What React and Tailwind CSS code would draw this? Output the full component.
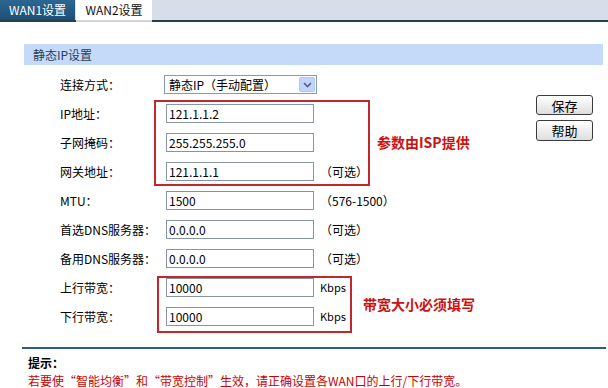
import React from "react";

const Input = ({ v }) => (
  <div className="w-[148px] h-[19px] border border-[#8595a6] bg-white flex items-center pl-[2px] text-[12px] leading-none text-black">
    {v}
  </div>
);

const Row = ({ label, children }) => (
  <div className="h-[29px] flex items-center">
    <div className="w-[142px] pl-[36px] shrink-0 whitespace-nowrap">{label}</div>
    {children}
  </div>
);

export default function App() {
  return (
    <div className="w-[608px] h-[388px] bg-white overflow-hidden font-['Noto_Sans_CJK_SC',sans-serif] text-[12px] text-black">
      {/* tab bar */}
      <div className="h-[22px] bg-[#d7deea] border-b-2 border-[#26404e] flex items-stretch">
        <div className="w-[75px] h-[20px] bg-linear-to-b from-[#2d6690] to-[#1b4f78] text-white flex items-center justify-center leading-none">
          WAN1设置
        </div>
        <div className="ml-[1px] w-[76px] h-[22px] -mb-[2px] bg-white border-b-2 border-[#d4d4d4] flex items-center justify-center leading-none text-[#111]">
          WAN2设置
        </div>
      </div>

      <div className="pl-[24px] pr-[5px] pt-[22px]">
        {/* section header */}
        <div className="h-[21px] bg-[#c5d9f8] flex items-center pl-[9px] text-[#27405a] leading-none">
          静态IP设置
        </div>

        {/* form */}
        <div className="relative mt-[5px] flex">
          <div className="flex flex-col">
            <Row label="连接方式：">
              <div className="-ml-[2px] w-[153px] h-[19px] border border-[#7f9db9] bg-white flex items-center justify-between leading-none">
                <span className="pl-[4px]">静态IP（手动配置）</span>
                <span className="w-[16px] h-[15px] mr-[1px] bg-[#c3d4fb] border border-[#b1c6ef] rounded-[2px] flex items-center justify-center">
                  <svg width="9" height="6" viewBox="0 0 9 6">
                    <path d="M1 1 L4.5 4.5 L8 1" fill="none" stroke="#4d6185" strokeWidth="1.6" />
                  </svg>
                </span>
              </div>
            </Row>
            <Row label="IP地址：">
              <Input v="121.1.1.2" />
            </Row>
            <Row label="子网掩码：">
              <Input v="255.255.255.0" />
            </Row>
            <Row label="网关地址：">
              <Input v="121.1.1.1" />
              <span className="ml-[6px]">（可选）</span>
            </Row>
            <Row label="MTU：">
              <Input v="1500" />
              <span className="ml-[6px]">（576-1500）</span>
            </Row>
            <Row label="首选DNS服务器：">
              <Input v="0.0.0.0" />
              <span className="ml-[6px]">（可选）</span>
            </Row>
            <Row label="备用DNS服务器：">
              <Input v="0.0.0.0" />
              <span className="ml-[6px]">（可选）</span>
            </Row>
            <Row label="上行带宽：">
              <Input v="10000" />
              <span className="ml-[6px] text-[11px]">Kbps</span>
            </Row>
            <Row label="下行带宽：">
              <Input v="10000" />
              <span className="ml-[6px] text-[11px]">Kbps</span>
            </Row>
          </div>

          <div className="flex-1" />

          <div className="flex flex-col gap-[5px] pt-[25px] mr-[10px]">
            <button className="w-[57px] h-[20px] rounded-[3px] border border-[#3c3c3c] bg-linear-to-b from-white to-[#dedede] text-[13px] leading-none flex items-center justify-center">
              保存
            </button>
            <button className="w-[57px] h-[21px] rounded-[3px] border border-[#3c3c3c] bg-linear-to-b from-white to-[#dedede] text-[13px] leading-none flex items-center justify-center">
              帮助
            </button>
          </div>

          {/* annotations */}
          <div className="absolute left-[130px] top-[30px] w-[216px] h-[86px] border-2 border-[#c1272d]" />
          <div className="absolute left-[353px] top-[65px] text-[14px] font-bold text-[#cc1111] leading-none whitespace-nowrap">
            参数由ISP提供
          </div>
          <div className="absolute left-[133px] top-[206px] w-[195px] h-[57px] border-2 border-[#c1272d]" />
          <div className="absolute left-[339px] top-[227px] text-[14px] font-bold text-[#cc1111] leading-none whitespace-nowrap">
            带宽大小必须填写
          </div>
        </div>

        {/* bottom */}
        <div className="mt-[16px] -ml-[2px] mr-[-3px] h-[2px] bg-[#2b5d80]" />
        <div className="pl-[4px] pt-[6px] leading-[16px]">
          <div className="font-bold">提示：</div>
          <div className="text-[#cc0000] mt-[2px] whitespace-nowrap">
            若要使“智能均衡”和“带宽控制”生效，请正确设置各WAN口的上行/下行带宽。
          </div>
        </div>
      </div>
    </div>
  );
}
